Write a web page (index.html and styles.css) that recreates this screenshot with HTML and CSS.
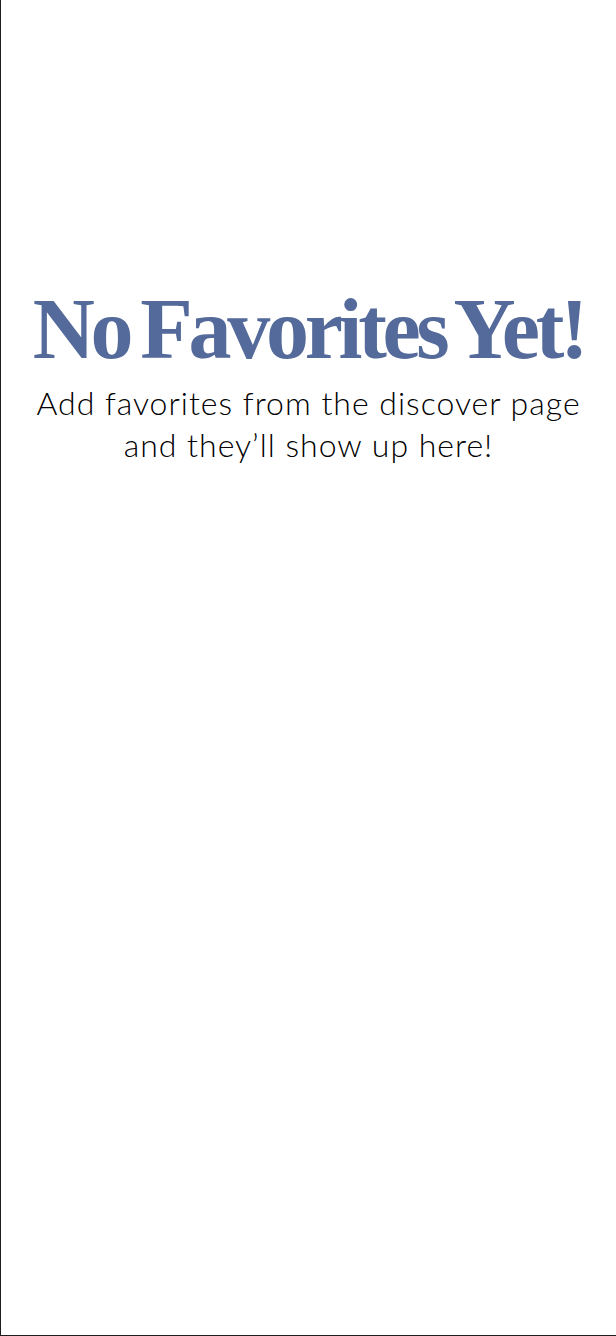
FILE: index.html
```html
<!DOCTYPE html>
<html lang="en">
<head>
<meta charset="utf-8">
<title>Favorites</title>
<link rel="stylesheet" href="styles.css">
</head>
<body>
<main class="screen">
  <section class="empty">
    <h1 class="empty-title">No Favorites Yet!</h1>
    <p class="empty-text">Add favorites from the discover page<br>and they’ll show up here!</p>
  </section>
</main>
</body>
</html>
```

FILE: styles.css
```css
html, body {
  margin: 0;
  padding: 0;
  background: #ffffff;
}
.screen {
  box-sizing: border-box;
  width: 616px;
  height: 1336px;
  border-left: 1px solid #1e1e1e;
  border-bottom: 1px solid #1e1e1e;
  display: flex;
  flex-direction: column;
  align-items: center;
  padding-top: 286px;
}
.empty {
  display: flex;
  flex-direction: column;
  align-items: center;
  text-align: center;
}
.empty-title {
  margin: 0;
  font-family: "Liberation Serif", "Times New Roman", serif;
  font-weight: 700;
  font-size: 86px;
  line-height: 86px;
  letter-spacing: -4.3px;
  word-spacing: -6px;
  color: #546a9a;
  white-space: nowrap;
}
.empty-text {
  margin: 10px 0 0;
  font-family: Lato, "Noto Sans", sans-serif;
  font-weight: 300;
  font-size: 32px;
  line-height: 42px;
  letter-spacing: 1px;
  color: #000000;
}
```
